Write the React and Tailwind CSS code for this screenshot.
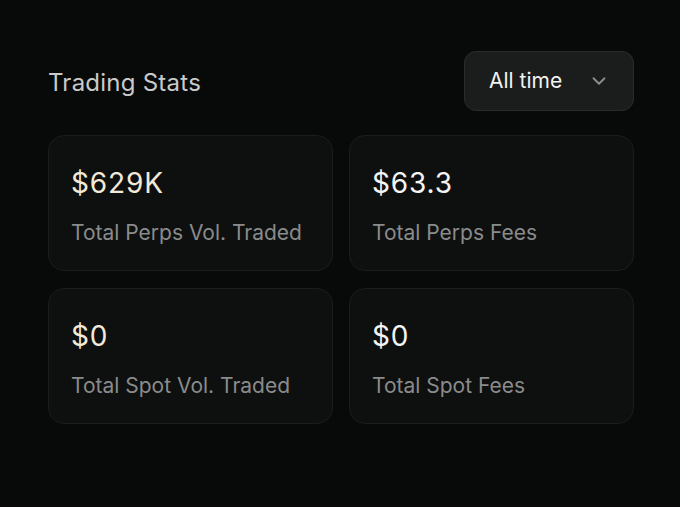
import { ChevronDown } from "lucide-react"

const stats = [
  { value: "$629K", label: "Total Perps Vol. Traded", accent: true },
  { value: "$63.3", label: "Total Perps Fees" },
  { value: "$0", label: "Total Spot Vol. Traded", accent: true },
  { value: "$0", label: "Total Spot Fees" },
]

const StatCard = ({ value, label, accent }) => (
  <div className="h-[136px] rounded-2xl border border-[#1b1c1c] bg-[#0e0f0f] pl-[22px] pr-2 pt-[33px]">
    <div className={`text-[28px] leading-none tracking-[0.03em] ${accent ? "text-[#f2ead8]" : "text-[#f4f4f4]"}`}>
      {value}
    </div>
    <div className="mt-[25px] whitespace-nowrap text-[21px] leading-none text-[#8a8b8b]">{label}</div>
  </div>
)

const App = () => {
  return (
    <div
      className="h-[507px] w-[680px] bg-[#080909] pl-12 pr-[46px] pt-[51px]"
      style={{ fontFamily: "Inter, 'Noto Sans', sans-serif" }}
    >
      {/* Header */}
      <div className="flex items-center justify-between">
        <h2 className="pt-[3px] text-[24px] font-normal tracking-[0.01em] text-[#c9caca]">Trading Stats</h2>
        <button className="flex h-[60px] w-[170px] items-center gap-[26px] rounded-xl border border-[#2a2b2b] bg-[#1b1c1c] pl-6 text-[21px] text-[#f2f2f2]">
          All time
          <ChevronDown className="h-[22px] w-[22px] text-[#8d8e8e]" strokeWidth={2} />
        </button>
      </div>

      {/* Stats grid */}
      <div className="mt-6 grid grid-cols-2 gap-x-4 gap-y-[17px]">
        {stats.map((s) => (
          <StatCard key={s.label} {...s} />
        ))}
      </div>
    </div>
  )
}

export default App
